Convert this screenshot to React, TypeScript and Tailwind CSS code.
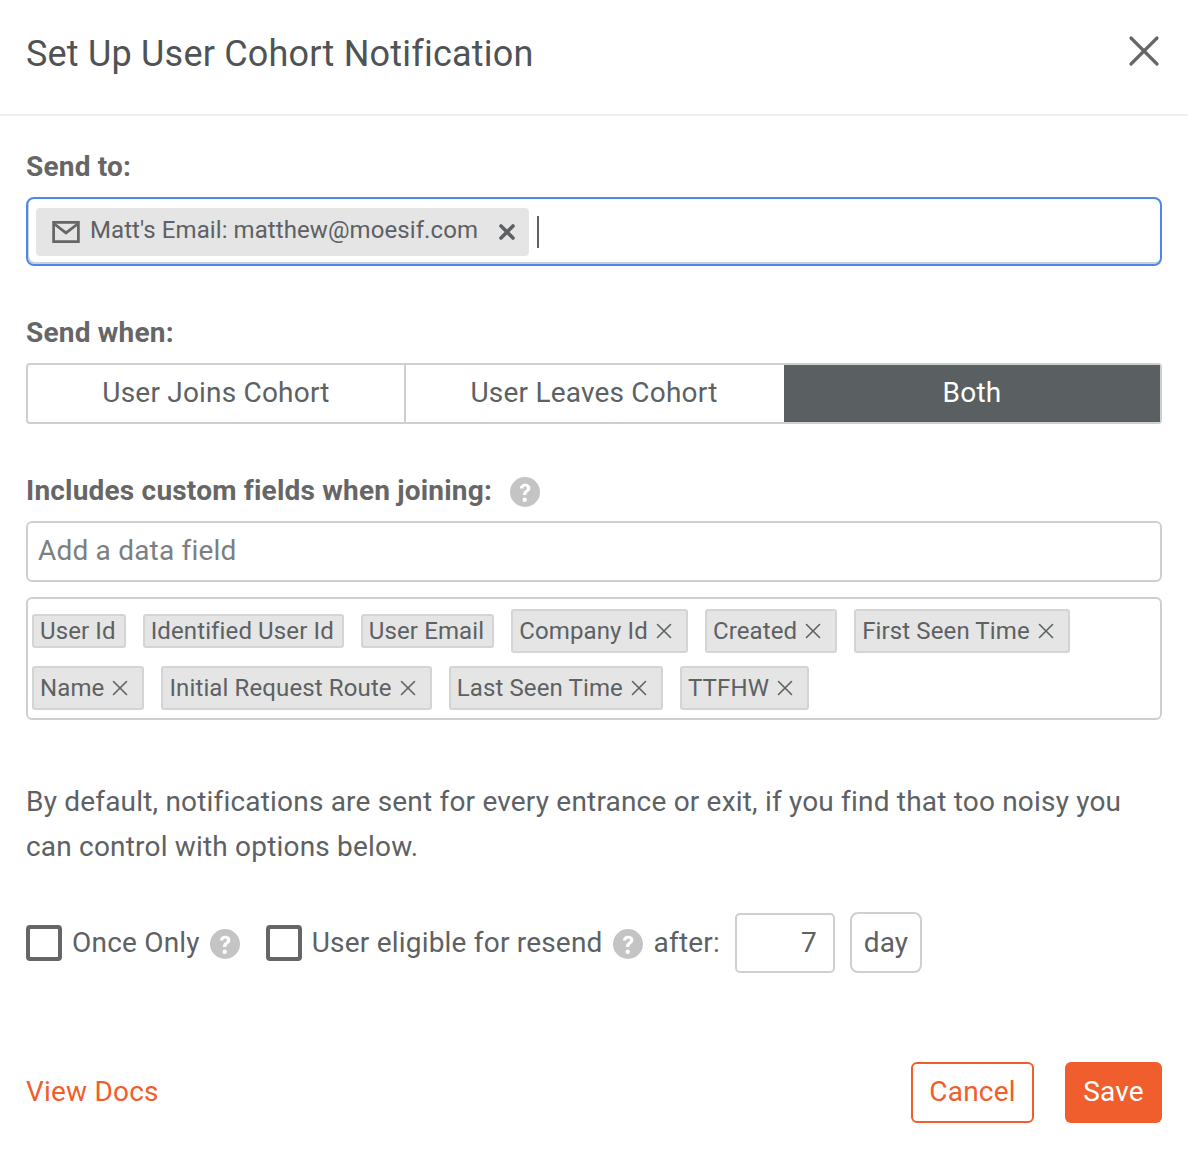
import { X } from "lucide-react";

const Help = ({ className }: { className: string }) => (
  <svg viewBox="0 0 30 30" className={className}>
    <circle cx="15" cy="15" r="15" fill="#c4c4c4" />
    <path d="M9.800 11.600c.3-3.100 2.400-4.900 5.400-4.900 3 0 5.200 1.800 5.200 4.400 0 2-1.100 3.100-2.400 4-1.200.8-1.700 1.400-1.700 2.800h-3.300c0-2.400.8-3.600 2.400-4.700 1-.7 1.500-1.200 1.500-2 0-1-.7-1.600-1.700-1.600-1.100 0-1.900.8-2 2z" fill="#fff" />
    <circle cx="14.700" cy="22.800" r="2.200" fill="#fff" />
  </svg>
);

const Tag = ({ label, removable }: { label: string; removable?: boolean }) => (
  <div className={`flex items-center rounded-[3px] border-2 border-[#d3d5d5] bg-[#e5e5e5] pl-[6px] ${removable ? "h-[44px] pr-[9px]" : "h-[34px] pr-[8px]"}`}>
    <span className="text-[24px] leading-none tracking-[0.12px] text-[#5d6163]">{label}</span>
    {removable && <X className="ml-[3px] h-[26px] w-[26px] text-[#5d6163]" strokeWidth={1.500} />}
  </div>
);

const Check = () => <div className="h-[36px] w-[36px] shrink-0 rounded-[4px] border-[4px] border-[#666]" />;

export default function App() {
  return (
    <div className="h-[1162px] w-[1188px] bg-white font-['Roboto',sans-serif] text-[#5d6163]">
      <header className="flex h-[116px] items-center justify-between border-b-2 border-[#eeeeee] px-[26px] pb-[6px]">
        <h1 className="text-[36px] leading-none tracking-[0.2px] text-[#4f5355]">Set Up User Cohort Notification</h1>
        <X className="mr-[-8px] mt-[-7px] h-[52px] w-[52px] text-[#666]" strokeWidth={1.500} />
      </header>

      <main className="px-[26px]">
        <p className="mt-[35px] text-[28px] font-bold leading-[32px] tracking-[0.2px] text-[#666]">Send to:</p>
        <div className="mt-[14px] flex h-[69px] items-center rounded-[8px] border-2 border-[#4a88ee] pl-[8px] shadow-[inset_1px_-2px_0_0_#cdd0d0]">
          <div className="flex h-[48px] w-[493px] items-center rounded-[4px] bg-[#e5e5e5] pl-[15px] pr-[10px]">
            <svg viewBox="0 0 30 24" className="h-[22px] w-[30px]">
              <path d="M1.500 1.500h27v21h-27z" fill="none" stroke="#666" strokeWidth="3" />
              <path d="M2 3l13 10L28 3" fill="none" stroke="#666" strokeWidth="3" />
            </svg>
            <span className="ml-[9px] mt-[-3px] text-[24px] leading-none tracking-[0.08px]">Matt's Email: matthew@moesif.com</span>
            <X className="ml-auto h-[24px] w-[24px] text-[#5d6163]" strokeWidth={3.600} />
          </div>
          <div className="ml-[8px] h-[32px] w-[2px] bg-[#5d6163]" />
        </div>

        <p className="mt-[51px] text-[28px] font-bold leading-[32px] tracking-[0.2px] text-[#666]">Send when:</p>
        <div className="mt-[14px] grid h-[61px] grid-cols-[378px_378px_1fr] rounded-[4px] border-2 border-[#cdd0d0] text-[28px] tracking-[0.2px]">
          <div className="flex items-center justify-center border-r-2 border-[#cdd0d0] pb-[2px]">User Joins Cohort</div>
          <div className="flex items-center justify-center pb-[2px] pr-[2px]">User Leaves Cohort</div>
          <div className="flex items-center justify-center bg-[#5a5f61] pb-[2px] text-white">Both</div>
        </div>

        <div className="mt-[50px] flex items-center">
          <p className="text-[28px] font-bold leading-[32px] tracking-[0.2px] text-[#666]">Includes custom fields when joining:</p>
          <Help className="ml-[18px] mt-[3px] h-[30px] w-[30px]" />
        </div>
        <div className="mt-[14px] flex h-[61px] items-center rounded-[6px] border-2 border-[#cdd0d0] pb-[2px] pl-[10px] text-[28px] tracking-[0.2px] text-[#7b7f81]">Add a data field</div>
        <div className="mt-[15px] flex h-[123px] flex-col gap-[13px] rounded-[6px] border-2 border-[#cdd0d0] pl-[4px] pt-[10px]">
          <div className="flex items-center gap-x-[17px]">
            <Tag label="User Id" />
            <Tag label="Identified User Id" />
            <Tag label="User Email" />
            <Tag label="Company Id" removable />
            <Tag label="Created" removable />
            <Tag label="First Seen Time" removable />
          </div>
          <div className="flex items-center gap-x-[17px]">
            <Tag label="Name" removable />
            <Tag label="Initial Request Route" removable />
            <Tag label="Last Seen Time" removable />
            <Tag label="TTFHW" removable />
          </div>
        </div>

        <p className="mt-[59px] text-[28px] leading-[45px] tracking-[0.19px]">By default, notifications are sent for every entrance or exit, if you find that too noisy you can control with options below.</p>

        <div className="mt-[43px] flex items-center text-[28px] tracking-[0.2px]">
          <Check />
          <span className="ml-[10px]">Once Only</span>
          <Help className="ml-[10px] mt-[3px] h-[30px] w-[30px]" />
          <div className="ml-[26px]"><Check /></div>
          <span className="ml-[10px]">User eligible for resend</span>
          <Help className="ml-[10px] mt-[3px] h-[30px] w-[30px]" />
          <span className="ml-[11px]">after:</span>
          <div className="ml-[15px] flex h-[60px] w-[100px] items-center justify-end rounded-[5px] border-2 border-[#cdd0d0] pr-[16px]">7</div>
          <div className="ml-[15px] flex h-[61px] w-[72px] items-center justify-center rounded-[8px] border-2 border-[#cdd0d0]">day</div>
        </div>

        <div className="mt-[89px] flex items-center justify-between text-[28px] tracking-[0.2px]">
          <a className="pb-[2px] text-[#f05e2d]">View Docs</a>
          <div className="flex gap-[31px]">
            <button className="h-[61px] w-[123px] rounded-[6px] border-2 border-[#f05e2d] pb-[2px] text-[#f05e2d]">Cancel</button>
            <button className="h-[61px] w-[97px] rounded-[6px] bg-[#f05e2d] pb-[2px] text-white">Save</button>
          </div>
        </div>
      </main>
    </div>
  );
}
